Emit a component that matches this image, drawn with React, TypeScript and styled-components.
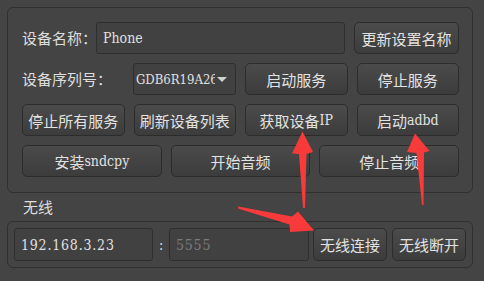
import styled, { createGlobalStyle } from "styled-components";

const Global = createGlobalStyle`
  html, body {
    margin: 0;
    padding: 0;
    background: #444444;
    width: 484px;
    height: 281px;
    overflow: hidden;
  }
  body {
    font-family: "Noto Sans CJK SC", "Noto Sans", sans-serif;
    font-size: 15px;
    color: #dedede;
  }
`;

const Page = styled.div`
  position: relative;
  width: 484px;
  height: 281px;
  box-sizing: border-box;
  padding: 7px 11px 0 7px;
  display: flex;
  flex-direction: column;
`;

const GroupBox = styled.div`
  border: 1px solid #303030;
  border-radius: 6px;
  padding: 14px 13px 15px 14px;
  display: flex;
  flex-direction: column;
  gap: 9px;
`;

const Row = styled.div`
  display: flex;
  align-items: center;
  height: 32px;
`;

const Label = styled.div<{ w: number }>`
  width: ${(p) => p.w}px;
  flex: none;
  white-space: nowrap;
  line-height: 32px;
`;

const Fields = styled.div`
  flex: 1;
  display: flex;
  gap: 9px;
  height: 100%;
`;

const Grid = styled.div<{ cols: number }>`
  display: grid;
  grid-template-columns: repeat(${(p) => p.cols}, 1fr);
  gap: 9px;
  height: 32px;
`;

const Button = styled.button<{ w?: number }>`
  ${(p) => (p.w ? `width: ${p.w}px; flex: none;` : "flex: 1;")}
  height: 100%;
  box-sizing: border-box;
  border: 1px solid #2c2c2c;
  border-radius: 5px;
  background: linear-gradient(#4b4b4b, #3c3c3c);
  color: #e2e2e2;
  font-family: "Noto Sans CJK SC", "Noto Sans", sans-serif;
  font-size: 15px;
  padding: 0;
  white-space: nowrap;
  display: flex;
  align-items: center;
  justify-content: center;
`;

const Latin = styled.span`
  font-family: "DejaVu Serif Condensed", "DejaVu Serif", serif;
  font-size: 14px;
`;

const Input = styled.div<{ w?: number; dim?: boolean; spaced?: boolean }>`
  ${(p) => (p.w ? `width: ${p.w}px; flex: none;` : "flex: 1;")}
  height: 100%;
  box-sizing: border-box;
  border: 1px solid #2e2e2e;
  border-radius: 3px;
  background: #414141;
  padding: 0 6px;
  display: flex;
  align-items: center;
  font-family: "DejaVu Serif Condensed", "DejaVu Serif", serif;
  font-size: 14px;
  letter-spacing: ${(p) => (p.spaced ? "0.8px" : "0")};
  color: ${(p) => (p.dim ? "#7c7c7c" : "#e0e0e0")};
`;

const Combo = styled.div`
  width: 103px;
  flex: none;
  height: 100%;
  box-sizing: border-box;
  border: 1px solid #2e2e2e;
  border-radius: 3px;
  background: #414141;
  padding: 0 8px 0 2px;
  display: flex;
  align-items: center;
  gap: 2px;
`;

const ComboText = styled.div`
  flex: 1;
  overflow: hidden;
  white-space: nowrap;
  font-family: "DejaVu Serif Condensed", "DejaVu Serif", serif;
  font-size: 13px;
  color: #e0e0e0;
`;

const Caret = styled.div`
  width: 0;
  height: 0;
  border-left: 5px solid transparent;
  border-right: 5px solid transparent;
  border-top: 5px solid #d0d0d0;
`;

const SectionTitle = styled.div`
  height: 28px;
  line-height: 28px;
  padding-left: 16px;
`;

const WirelessBox = styled.div`
  border: 1px solid #303030;
  border-radius: 6px;
  padding: 6px;
  height: 33px;
  display: flex;
  align-items: center;
`;

const Colon = styled.div`
  width: 16px;
  flex: none;
  text-align: center;
  font-family: "DejaVu Serif Condensed", "DejaVu Serif", serif;
  font-size: 14px;
`;

const Spacer = styled.div<{ w: number }>`
  width: ${(p) => p.w}px;
  flex: none;
`;

const Overlay = styled.svg`
  position: absolute;
  left: 0;
  top: 0;
  pointer-events: none;
`;

const arrows = [
  "303,208 299,154 292,153.5 302.5,131.5 313,152 306.5,154 305,208",
  "422,205 416.5,153 407,152 415,133.5 429.5,151 424,152.5 423.5,205",
  "238,206.5 292,216.5 298,211.5 314,230.5 290,232 289.5,224.5 238,208.5",
];

export default function App() {
  return (
    <Page>
      <Global />
      <GroupBox>
        <Row>
          <Label w={74}>设备名称：</Label>
          <Fields>
            <Input>Phone</Input>
            <Button w={105}>更新设置名称</Button>
          </Fields>
        </Row>
        <Row>
          <Label w={111}>设备序列号：</Label>
          <Fields>
            <Combo>
              <ComboText>GDB6R19A260000</ComboText>
              <Caret />
            </Combo>
            <Button>启动服务</Button>
            <Button>停止服务</Button>
          </Fields>
        </Row>
        <Grid cols={4}>
          <Button>停止所有服务</Button>
          <Button>刷新设备列表</Button>
          <Button>
            获取设备<Latin>IP</Latin>
          </Button>
          <Button>
            启动<Latin>adbd</Latin>
          </Button>
        </Grid>
        <Grid cols={3}>
          <Button>
            安装<Latin>sndcpy</Latin>
          </Button>
          <Button>开始音频</Button>
          <Button>停止音频</Button>
        </Grid>
      </GroupBox>
      <SectionTitle>无线</SectionTitle>
      <WirelessBox>
        <Input w={139} spaced>
          192.168.3.23
        </Input>
        <Colon>:</Colon>
        <Input w={140} dim spaced>
          5555
        </Input>
        <Spacer w={4} />
        <Button w={74}>无线连接</Button>
        <Spacer w={5} />
        <Button w={74}>无线断开</Button>
      </WirelessBox>
      <Overlay width={484} height={281} viewBox="0 0 484 281">
        {arrows.map((pts, i) => (
          <polygon key={i} points={pts} fill="#f93a3a" />
        ))}
      </Overlay>
    </Page>
  );
}
